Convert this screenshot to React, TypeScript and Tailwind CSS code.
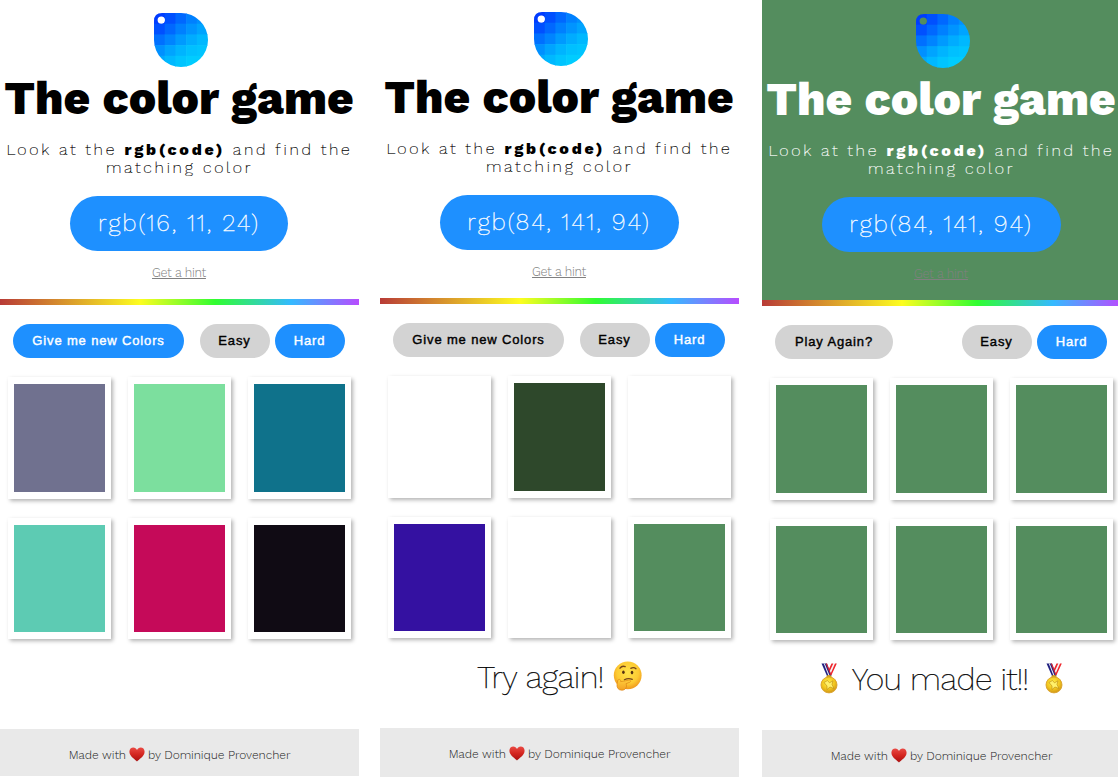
import React from "react";
import clsx from "clsx";

type Panel = {
  offset: string;
  header: string;
  ink: string;
  code: string;
  pill: string;
  action: string;
  actionActive: boolean;
  cards: string[];
  message: React.ReactNode;
  footer: string;
};

const LOGO = [
  ["#003cff", "#0050ff", "#0068ff", "#0080ff", "#0090ff"],
  ["#0050ff", "#0068ff", "#0080ff", "#0094ff", "#00a4ff"],
  ["#0070ff", "#0084ff", "#009aff", "#00acff", "#00b8ff"],
  ["#0090ff", "#00a4ff", "#00b4ff", "#00c0ff", "#00c4ff"],
  ["#00a8ff", "#00b8ff", "#00c4ff", "#00ccff", "#00ccff"],
];

function Logo({ id }: { id: string }) {
  return (
    <svg className="h-[54px] w-[54px] shrink-0" viewBox="0 0 54 54">
      <clipPath id={id}>
        <path
          clipRule="evenodd"
          d="M8 0H27A27 27 0 1 1 0 27V8Q0 0 8 0ZM7.3 3.4a3.7 3.7 0 1 0 0 7.4a3.7 3.7 0 1 0 0-7.4Z"
        />
      </clipPath>
      <g clipPath={`url(#${id})`}>
        {LOGO.map((row, y) =>
          row.map((fill, x) => (
            <rect key={`${x}-${y}`} x={x * 10.7} y={y * 10.7} width="11.3" height="11.3" fill={fill} />
          )),
        )}
      </g>
    </svg>
  );
}

function Heart() {
  return (
    <svg className="mx-[3px] mt-px h-[15px] w-4 shrink-0" viewBox="0 0 16 15">
      <defs>
        <linearGradient id="heart" x1="0" y1="0" x2="0" y2="1">
          <stop offset="0" stopColor="#ea4a44" />
          <stop offset="0.5" stopColor="#d3251f" />
          <stop offset="1" stopColor="#a80f10" />
        </linearGradient>
      </defs>
      <path
        fill="url(#heart)"
        d="M8 14.6C6.600 12.600.4 9.300.4 4.700C.4 2.100 2.200.5 4.300.5C6 .5 7.300 1.400 8 3C8.700 1.400 10 .5 11.700.5C13.800.5 15.600 2.100 15.600 4.700C15.600 9.300 9.400 12.600 8 14.600Z"
      />
    </svg>
  );
}

function Thinking() {
  return (
    <svg className="ml-[9px] h-[30px] w-[29px] shrink-0 -translate-y-px" viewBox="0 0 29 30">
      <defs>
        <radialGradient id="face" cx="0.5" cy="0.4" r="0.6">
          <stop offset="0" stopColor="#ffe34a" />
          <stop offset="0.65" stopColor="#fdcb33" />
          <stop offset="1" stopColor="#f0981d" />
        </radialGradient>
        <linearGradient id="hand" x1="0" y1="0" x2="0" y2="1">
          <stop offset="0" stopColor="#ffcf3c" />
          <stop offset="1" stopColor="#f3a024" />
        </linearGradient>
      </defs>
      <circle cx="14.700" cy="14.300" r="13.900" fill="url(#face)" />
      <path d="M7 7.200Q9 4.400 12.200 5.700M17.800 7.300Q20.700 5.800 23 7.700" fill="none" stroke="#75451a" strokeWidth="1.300" strokeLinecap="round" />
      <ellipse cx="10.400" cy="11.300" rx="1.300" ry="1.800" fill="#553012" />
      <ellipse cx="19" cy="11.600" rx="1.300" ry="1.800" fill="#553012" />
      <path d="M11.400 18.800Q15.200 16.800 19.300 18.400" fill="none" stroke="#75451a" strokeWidth="1.200" strokeLinecap="round" />
      <path
        d="M4.800 19.200C6.400 17.600 8 18.600 7.700 20.700L15.800 19.200C17.800 18.900 18.300 20.700 16.500 21.400L13 22.700C14.500 25.700 12.500 29.400 8.700 29.200C5.300 29.200 3.700 26.600 4 23.600Z"
        fill="url(#hand)"
        stroke="#dc8517"
        strokeWidth="0.700"
      />
    </svg>
  );
}

function Medal() {
  return (
    <svg className="h-[31px] w-[18px] shrink-0 -translate-y-px" viewBox="0 0 18 31">
      <defs>
        <radialGradient id="gold" cx="0.45" cy="0.35" r="0.65">
          <stop offset="0" stopColor="#ffee48" />
          <stop offset="0.6" stopColor="#f2c71e" />
          <stop offset="1" stopColor="#d09516" />
        </radialGradient>
      </defs>
      <path d="M11.500.5H16.800L11 13H7Z" fill="#f4f4f6" />
      <path d="M11.500.5H13.300L9.600 8.500L8.700 6.500ZM15 .5H16.800L11.500 12H10Z" fill="#f0262c" />
      <path d="M1.500.5H7L11.500 13H7Z" fill="#1f1f80" />
      <path d="M3.700.5H4.700L9.700 13H8.600Z" fill="#f4f4f6" />
      <path d="M5.800.5H7L11.500 12H10.400Z" fill="#e0262f" />
      <ellipse cx="9" cy="13.700" rx="2.700" ry="1.700" fill="#d7a51b" />
      <circle cx="9" cy="21.900" r="8" fill="url(#gold)" stroke="#d9a12a" strokeWidth="0.900" />
      <path d="M4 19.500L7.500 17.500L9.500 19.800L13 17.800L12 21.500L14 25.500L10 24L7 26.500L7 23Z" fill="#fff06a" stroke="#b88612" strokeWidth="0.600" />
    </svg>
  );
}

function Pill({ active, className, children }: { active?: boolean; className: string; children: React.ReactNode }) {
  return (
    <button
      className={clsx(
        "h-[34px] rounded-full text-center font-['Liberation_Sans',Arial,sans-serif] text-[13px] tracking-[0.85px] whitespace-nowrap [-webkit-text-stroke:0.4px]",
        active ? "bg-[#1e90ff] text-white" : "bg-[#d3d3d3] text-black",
        className,
      )}
    >
      {children}
    </button>
  );
}

const WIN = "bg-[#548d5e]";

const panels: Panel[] = [
  {
    offset: "pt-[13px]",
    header: "bg-white",
    ink: "text-black",
    code: "rgb(16, 11, 24)",
    pill: "w-[218px]",
    action: "Give me new Colors",
    actionActive: true,
    cards: ["bg-[#70718f]", "bg-[#7cdf9e]", "bg-[#0f728b]", "bg-[#5dcbb3]", "bg-[#c50a59]", "bg-[#100b14]"],
    message: null,
    footer: "h-[47px]",
  },
  {
    offset: "pt-3",
    header: "bg-white",
    ink: "text-black",
    code: "rgb(84, 141, 94)",
    pill: "w-[239px]",
    action: "Give me new Colors",
    actionActive: false,
    cards: ["bg-white", "bg-[#2e482b]", "bg-white", "bg-[#3411a1]", "bg-white", WIN],
    message: (
      <>
        <span className="tracking-[-0.5px]">Try again!</span>
        <Thinking />
      </>
    ),
    footer: "h-[49px]",
  },
  {
    offset: "pt-[14px]",
    header: WIN,
    ink: "text-white",
    code: "rgb(84, 141, 94)",
    pill: "w-[239px]",
    action: "Play Again?",
    actionActive: false,
    cards: [WIN, WIN, WIN, WIN, WIN, WIN],
    message: (
      <>
        <Medal />
        <span className="mr-[17px] ml-[14px] tracking-[-0.6px]">You made it!!</span>
        <Medal />
      </>
    ),
    footer: "h-[49px]",
  },
];

function Game({ panel, index }: { panel: Panel; index: number }) {
  return (
    <section className="flex w-[359px] shrink-0 flex-col">
      <header className={clsx("flex flex-col items-center", panel.offset, panel.header, panel.ink)}>
        <div className="pl-[3px]">
          <Logo id={`drop-${index}`} />
        </div>
        <h1 className="mt-1.5 mr-px h-[50px] text-[46px] leading-[50px] font-extrabold whitespace-nowrap">
          The color game
        </h1>
        <p className="mt-[18px] h-[37px] text-center text-[16px] leading-[18px] font-extralight tracking-[2.75px] whitespace-nowrap [-webkit-text-stroke:0.2px]">
          Look at the <b className="font-extrabold [-webkit-text-stroke:0]">rgb(code)</b> and find the
          <br />
          matching color
        </p>
        <div
          className={clsx(
            "mt-[18px] mr-px flex h-[55px] items-center justify-center rounded-full bg-[#1e90ff] pb-px text-[24px] font-extralight tracking-[2px] whitespace-nowrap text-white [-webkit-text-stroke:0.3px]",
            panel.pill,
          )}
        >
          {panel.code}
        </div>
        <a className="mt-[14px] mr-px h-4 text-[12.5px] leading-4 font-light tracking-[-0.3px] text-[#808080] underline">
          Get a hint
        </a>
        <div className="mt-[18px] h-1.5 w-full bg-[linear-gradient(90deg,#b83b37_0%,#fdfd20_39%,#30fd30_60%,#34baff_81%,#b84cff_100%)]" />
      </header>
      <nav className="mt-[19px] flex pl-[13px]">
        <Pill active={panel.actionActive} className={panel.action === "Play Again?" ? "w-[118px]" : "w-[171px]"}>
          {panel.action}
        </Pill>
        <div className="mr-[14.5px] ml-auto flex gap-[5px]">
          <Pill className="w-[70px]">Easy</Pill>
          <Pill active className="w-[70px]">Hard</Pill>
        </div>
      </nav>
      <div className="mt-[19px] grid grid-cols-[102.5px_102.5px_102.5px] grid-rows-[122px_121px] gap-x-[17.5px] gap-y-[19px] pl-2">
        {panel.cards.map((color, i) => (
          <div key={i} className="flex bg-white px-[6px] pt-[6.5px] pb-[7px] shadow-[2px_2px_4px_rgba(0,0,0,0.3)]">
            <div className={clsx("flex-1", color)} />
          </div>
        ))}
      </div>
      <div className="mt-5 flex h-[38px] items-center justify-center text-[32px] font-extralight whitespace-nowrap [-webkit-text-stroke:0.25px]">
        {panel.message}
      </div>
      <footer
        className={clsx(
          "mt-8 flex items-start justify-center bg-[#e9e9e9] pt-[17px] text-[12px] leading-[18px] font-light tracking-[-0.07px] whitespace-nowrap text-[#222]",
          panel.footer,
        )}
      >
        Made with
        <Heart />
        by Dominique Provencher
      </footer>
    </section>
  );
}

export default function App() {
  return (
    <main className="flex h-[777px] w-[1118px] overflow-hidden bg-white font-['Work_Sans',Inter,sans-serif] text-black">
      <Game panel={panels[0]} index={0} />
      <div className="w-[21px] shrink-0" />
      <Game panel={panels[1]} index={1} />
      <div className="w-[23px] shrink-0" />
      <Game panel={panels[2]} index={2} />
    </main>
  );
}
